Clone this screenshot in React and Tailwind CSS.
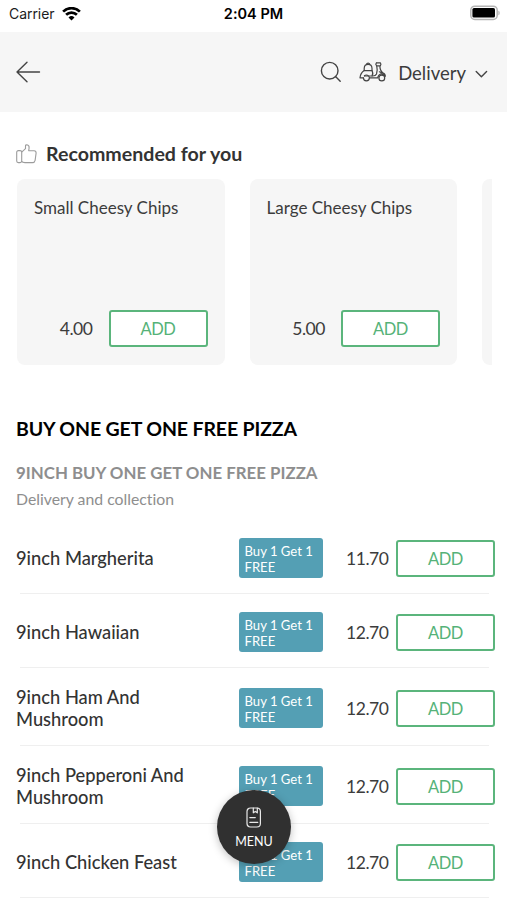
const recommended = [
  { name: "Small Cheesy Chips", price: "4.00" },
  { name: "Large Cheesy Chips", price: "5.00" },
];

// Two-line names need a slightly taller row
const pizzas = [
  { name: "9inch Margherita", price: "11.70", height: "h-[74px]" },
  { name: "9inch Hawaiian", price: "12.70", height: "h-[74px]" },
  { name: "9inch Ham And Mushroom", price: "12.70", height: "h-[78px]" },
  { name: "9inch Pepperoni And Mushroom", price: "12.70", height: "h-[78px]" },
  { name: "9inch Chicken Feast", price: "12.70", height: "h-[74px]" },
];

function AddButton() {
  return (
    <button className="w-[99px] h-[37px] shrink-0 rounded-[3px] border-2 border-[#5bb57c] bg-white pt-[2px] text-[16.5px] leading-none tracking-[-0.4px] text-[#55b278]">
      ADD
    </button>
  );
}

function StatusBar() {
  return (
    <div className="h-8 shrink-0 grid grid-cols-3 items-start pl-[9px] pr-[7px] pt-[5px] font-['Inter','Liberation_Sans',sans-serif] text-[#1c1c1c]">
      <div className="flex items-center gap-[6px]">
        <span className="w-[47px] text-[14px] leading-[18px] tracking-[-0.05px]">Carrier</span>
        <svg width="19" height="15" viewBox="0 0 19 15" fill="none" stroke="#000" strokeWidth="2.7">
          <path d="M1.1 4.6a12 12 0 0 1 16.8 0" />
          <path d="M4.1 7.8a7.7 7.7 0 0 1 10.8 0" />
          <path d="M9.5 13.6 6.5 10.5a4.3 4.3 0 0 1 6 0z" fill="#000" stroke="none" />
        </svg>
      </div>
      <span className="-ml-[2px] text-center text-[14.5px] leading-[18px] font-semibold text-black whitespace-nowrap">2:04 PM</span>
      <svg className="justify-self-end" width="31" height="16" viewBox="0 0 31 16">
        <rect x="1.8" y="1.2" width="26.4" height="13.2" rx="4" fill="#fff" stroke="#b5b5b5" strokeWidth="1.5" />
        <rect x="3.4" y="3" width="22.6" height="9.6" rx="1.6" fill="#000" />
        <path d="M29.4 5.8c1.7.5 1.7 4 0 4.4z" fill="#b5b5b5" />
      </svg>
    </div>
  );
}

function Header() {
  return (
    <header className="h-20 shrink-0 bg-[#f6f6f6] flex items-center pl-4 pr-[18px] text-[#444]">
      <svg width="25" height="22" viewBox="0 0 25 22" fill="none" stroke="currentColor" strokeWidth="1.4" strokeLinecap="round" strokeLinejoin="round">
        <path d="M23.5 11H1M11 1.2 1 11l10 9.8" />
      </svg>
      <svg className="ml-auto" width="22" height="22" viewBox="0 0 22 22" fill="none" stroke="currentColor" strokeWidth="1.4" strokeLinecap="round">
        <circle cx="9.7" cy="9.7" r="8.3" />
        <path d="m15.8 15.8 4.4 4.4" />
      </svg>
      <svg className="ml-[17px]" width="28" height="20" viewBox="0 0 28 20" fill="none" stroke="currentColor" strokeWidth="1.2" strokeLinecap="round" strokeLinejoin="round">
        <path d="M5.2 8.6V6.2q.2-3.8 3.9-3.8T13 6.2v2.4M7.2 2.5Q8 1 9.1 1t1.9 1.5M5.2 8.6H13" />
        <path d="M5.2 8.6Q1.4 11.2 1 15.8h3.4M13 8.6q1.6 3.4 0 5.4H5.6" />
        <path d="M4.4 15.8a3 3 0 0 0 6 0M5.4 13.8a3 3 0 0 1 5 2h8.4q.3-3 3.4-4M13.2 14q3.4.2 4.3-2Q18.8 8.6 17.8 4.4" />
        <path d="M17.4.9h4q1 1.2 0 2.9h-3.8q-1.5-1.5-.2-2.9M21 3.8q-.4 4.2 2.6 7 2.5.5 2.8 3.4-2-1.8-4.2-2.4" />
        <path d="M20.4 9.8q1.4.8 3.2 1" />
        <circle cx="22.8" cy="16" r="2.9" />
      </svg>
      <span className="ml-[11px] text-[18.5px] leading-6 text-[#3c3c3c] pb-px mt-[2px]">Delivery</span>
      <svg className="ml-[9px] mr-px mt-[3px]" width="13" height="8" viewBox="0 0 13 8" fill="none" stroke="currentColor" strokeWidth="1.4" strokeLinecap="round" strokeLinejoin="round">
        <path d="m1.2 1.5 5.2 5.2 5.2-5.2" />
      </svg>
    </header>
  );
}

function RecommendedCard({ item }) {
  return (
    <div className="w-[207.5px] h-[186px] shrink-0 rounded-lg bg-[#f6f6f6] flex flex-col justify-between pl-[17px] pr-[17px] pt-[18px] pb-[18px]">
      <p className="text-[17px] leading-[22px] text-[#3c3c3c]">{item.name}</p>
      <div className="flex items-center justify-end gap-[16px]">
        <span className="text-[17.5px] leading-none tracking-[-0.45px] text-[#3c3c3c]">{item.price}</span>
        <AddButton />
      </div>
    </div>
  );
}

function PizzaRow({ item }) {
  return (
    <div className={`${item.height} shrink-0 flex flex-col`}>
      <div className="flex-1 flex items-center pl-4 pr-3 pt-[3px]">
        <p className="w-[188px] text-[18.3px] leading-[22px] font-medium text-[#333]">{item.name}</p>
        <div className="ml-[34.5px] w-[84px] h-10 shrink-0 rounded-[3px] bg-[#549fb4] pl-[6px] pt-[5px] text-[13.1px] leading-4 text-white">
          Buy 1 Get 1 FREE
        </div>
        <span className="ml-auto mr-[7.5px] pt-px text-[17.5px] leading-none tracking-[-0.45px] text-[#3c3c3c]">{item.price}</span>
        <AddButton />
      </div>
      <div className="h-px ml-5 mr-[18px] bg-[#efefef]" />
    </div>
  );
}

function MenuButton() {
  return (
    <button className="absolute left-[217px] top-[790px] size-[74px] rounded-full bg-[#303030] shadow-[0_2px_8px_rgba(0,0,0,0.25)] flex flex-col items-center pt-[17px] text-white">
      <svg width="16" height="21" viewBox="0 0 16 21" fill="none" stroke="#e8e8e8" strokeWidth="1.2" strokeLinecap="round" strokeLinejoin="round">
        <rect x="1" y="1" width="13.4" height="19" rx="3.5" />
        <path d="M7.3 1v4.8l2-1.4 2 1.4V1M3.8 10.6h5.5M3.8 15.3h8" />
      </svg>
      <span className="mt-[6px] text-[12.5px] leading-4">MENU</span>
    </button>
  );
}

export default function App() {
  return (
    <div className="relative w-[507px] h-[900px] overflow-hidden bg-white flex flex-col font-['Lato',sans-serif] [font-variant-ligatures:none]">
      <StatusBar />
      <Header />

      <section className="shrink-0 pt-[30px]">
        <div className="flex items-center gap-[9px] pl-4 h-6">
          <svg width="21" height="20" viewBox="0 0 21 20" fill="none" stroke="#9c9c9c" strokeWidth="1.1" strokeLinejoin="round">
            <rect x="0.7" y="6.6" width="5" height="12" rx="1.6" />
            <path d="M5.7 8.2 9.5 4.7V1.9q0-1.2 1.4-1.2 2.5.3 2.2 3.3l-.4 2.7h5.4q2.1.2 2 2.4l-1 7.2q-.5 2.3-2.6 2.3H9q-2.6 0-3.3-1.2" />
          </svg>
          <h2 className="text-[19.6px] leading-6 font-bold text-[#333]">Recommended for you</h2>
        </div>
        <div className="mt-[13px] ml-[17px] mr-[15px] flex gap-[25px] overflow-hidden">
          {recommended.map((item) => (
            <RecommendedCard key={item.name} item={item} />
          ))}
          <div className="w-[207.5px] h-[186px] shrink-0 rounded-lg bg-[#f6f6f6]" />
        </div>
      </section>

      <section className="shrink-0 pt-[52px] pl-4">
        <h2 className="text-[19.5px] leading-6 font-bold tracking-[-0.13px] text-black">BUY ONE GET ONE FREE PIZZA</h2>
        <h3 className="mt-[21px] text-[16.85px] leading-[22px] font-bold text-[#8e8e8e]">9INCH BUY ONE GET ONE FREE PIZZA</h3>
        <p className="mt-[5px] text-[15.8px] leading-5 text-[#8e8e8e]">Delivery and collection</p>
      </section>

      <section className="flex flex-col pt-[11px]">
        {pizzas.map((item) => (
          <PizzaRow key={item.name} item={item} />
        ))}
      </section>

      <MenuButton />
    </div>
  );
}
